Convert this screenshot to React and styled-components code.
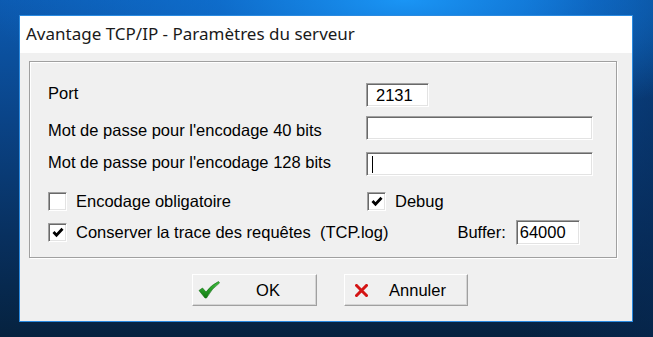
import React from 'react'
import styled, { createGlobalStyle } from 'styled-components'

const GlobalStyle = createGlobalStyle`
  html, body {
    margin: 0;
    padding: 0;
    width: 653px;
    height: 337px;
    overflow: hidden;
  }
  body {
    font-family: "Liberation Sans", Arial, sans-serif;
  }
`

const Desktop = styled.div`
  box-sizing: border-box;
  width: 653px;
  height: 337px;
  padding: 15px 20px 15px 19px;
  background:
    radial-gradient(ellipse 420px 120px at 62% 0%, #1a95f5 0%, rgba(16,120,220,0.6) 45%, rgba(10,80,160,0) 100%),
    linear-gradient(90deg, rgba(12,90,180,0.0) 0%, rgba(8,40,90,0.0) 80%, rgba(6,40,85,0.5) 100%),
    linear-gradient(180deg, #0c5ab0 0%, #0a4488 35%, #08305f 70%, #06223f 100%);
`

const Window = styled.div`
  box-sizing: border-box;
  height: 307px;
  border: 1px solid #2a8ae0;
  background: #f0f0f0;
  display: flex;
  flex-direction: column;
`

const TitleBar = styled.div`
  height: 37px;
  background: #ffffff;
  display: flex;
  align-items: center;
  padding: 0 0 2px 6px;
  box-sizing: border-box;
  font-family: "Noto Sans", "Open Sans", sans-serif;
  font-size: 17px;
  color: #1a1a1a;
`

const Body = styled.div`
  flex: 1;
  display: flex;
  flex-direction: column;
  padding: 8px 15px 15px 9px;
  font-size: 16.5px;
  color: #000;
`

const GroupBox = styled.div`
  box-sizing: border-box;
  height: 197px;
  border: 1px solid #a0a0a0;
  box-shadow: 1px 1px 0 #ffffff, inset 1px 1px 0 #ffffff;
  padding: 21px 0 0 18px;
  display: flex;
  flex-direction: column;
`

const FieldRow = styled.div`
  display: grid;
  grid-template-columns: 318px auto;
  align-items: center;
  height: 24px;
  margin-top: ${p => p.$gap || 0}px;
`

const Label = styled.span`
  white-space: nowrap;
  line-height: 1;
  position: relative;
  top: ${p => p.$shift || 0}px;
`

const Field = styled.div`
  box-sizing: border-box;
  width: ${p => p.$w}px;
  height: ${p => p.$h || 24}px;
  background: #fff;
  border-top: 1px solid #a0a0a0;
  border-left: 1px solid #a0a0a0;
  border-right: 1px solid #ffffff;
  border-bottom: 1px solid #ffffff;
  box-shadow: inset 1px 1px 0 #696969, inset -1px -1px 0 #e3e3e3;
  display: flex;
  align-items: center;
  padding-left: ${p => p.$pad || 3}px;
  line-height: 1;
  white-space: nowrap;
`

const Caret = styled.span`
  width: 1px;
  height: 17px;
  background: #000;
  margin-left: 2px;
`

const CheckRow = styled.div`
  display: flex;
  align-items: center;
  height: ${p => p.$h || 19}px;
  margin-top: ${p => p.$gap || 0}px;
`

const CheckItem = styled.div`
  display: flex;
  align-items: center;
  gap: 9px;
  white-space: nowrap;
  line-height: 1;
  width: ${p => (p.$w ? `${p.$w}px` : 'auto')};
`

const Box = styled.span`
  box-sizing: border-box;
  width: 19px;
  height: 19px;
  background: #fff;
  border-top: 1px solid #a0a0a0;
  border-left: 1px solid #a0a0a0;
  border-right: 1px solid #ffffff;
  border-bottom: 1px solid #ffffff;
  box-shadow: inset 1px 1px 0 #696969, inset -1px -1px 0 #e3e3e3;
  display: flex;
  align-items: center;
  justify-content: center;
  flex: none;
`

const BufferGroup = styled.div`
  display: flex;
  align-items: center;
  margin-left: 69px;
  gap: 10px;
`

const ButtonBar = styled.div`
  display: flex;
  justify-content: center;
  gap: 27px;
  margin-top: 16px;
  padding-left: 14px;
`

const Button = styled.div`
  box-sizing: border-box;
  width: ${p => p.$w}px;
  height: 32px;
  background: #f0f0f0;
  border-top: 1px solid #ffffff;
  border-left: 1px solid #ffffff;
  border-right: 1px solid #a0a0a0;
  border-bottom: 1px solid #a0a0a0;
  box-shadow: inset -1px -1px 0 #d4d4d4;
  display: flex;
  align-items: center;
  padding-left: ${p => p.$pad}px;
`

const ButtonText = styled.span`
  flex: 1;
  text-align: center;
  line-height: 1;
`

const CheckMark = () => (
  <svg width="12" height="11" viewBox="0 0 12 11">
    <path d="M1.5 5 L4.5 8.2 L10.5 1.8" fill="none" stroke="#000" strokeWidth="2.8" />
  </svg>
)

const GreenCheck = () => (
  <svg width="22" height="18" viewBox="0 0 22 18">
    <defs>
      <linearGradient id="gc" x1="0" y1="0" x2="0" y2="1">
        <stop offset="0" stopColor="#3fbf3f" />
        <stop offset="1" stopColor="#117a11" />
      </linearGradient>
    </defs>
    <path d="M1 9.5 L4.5 7 L8 11 Q13 4 20.5 0.5 L21.5 2 Q14 7 8.5 17 L7 17 Z" fill="url(#gc)" stroke="#0d6a0d" strokeWidth="0.6" />
  </svg>
)

const RedCross = () => (
  <svg width="13" height="13" viewBox="0 0 13 13">
    <path d="M1.5 1.5 L11.5 11.5 M11.5 1.5 L1.5 11.5" stroke="#d41414" strokeWidth="3" strokeLinecap="square" />
  </svg>
)

export default function App() {
  return (
    <>
      <GlobalStyle />
      <Desktop>
        <Window>
          <TitleBar>Avantage TCP/IP - Paramètres du serveur</TitleBar>
          <Body>
            <GroupBox>
              <FieldRow>
                <Label $shift={-2}>Port</Label>
                <Field $w={63} $pad={9}>2131</Field>
              </FieldRow>
              <FieldRow $gap={9}>
                <Label $shift={2}>Mot de passe pour l'encodage 40 bits</Label>
                <Field $w={227} />
              </FieldRow>
              <FieldRow $gap={12}>
                <Label $shift={-2}>Mot de passe pour l'encodage 128 bits</Label>
                <Field $w={227}><Caret /></Field>
              </FieldRow>
              <CheckRow $gap={16}>
                <CheckItem $w={319}>
                  <Box />
                  <span>Encodage obligatoire</span>
                </CheckItem>
                <CheckItem>
                  <Box><CheckMark /></Box>
                  <span>Debug</span>
                </CheckItem>
              </CheckRow>
              <CheckRow $gap={9} $h={25}>
                <CheckItem>
                  <Box><CheckMark /></Box>
                  <span>Conserver la trace des requêtes&nbsp;&nbsp;(TCP.log)</span>
                </CheckItem>
                <BufferGroup>
                  <Label>Buffer:</Label>
                  <Field $w={64} $h={25}>64000</Field>
                </BufferGroup>
              </CheckRow>
            </GroupBox>
            <ButtonBar>
              <Button $w={125} $pad={5}>
                <GreenCheck />
                <ButtonText>OK</ButtonText>
              </Button>
              <Button $w={124} $pad={10}>
                <RedCross />
                <ButtonText>Annuler</ButtonText>
              </Button>
            </ButtonBar>
          </Body>
        </Window>
      </Desktop>
    </>
  )
}
